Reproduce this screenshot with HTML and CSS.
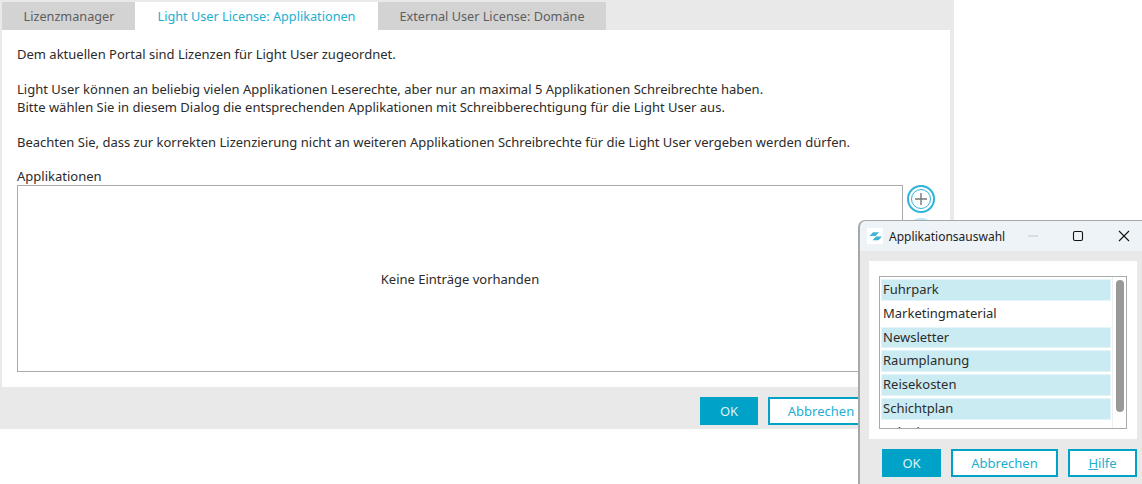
FILE: index.html
```html
<!DOCTYPE html>
<html lang="de">
<head>
    <meta charset="UTF-8" />
    <title>Light User License</title>
    <link rel="stylesheet" href="styles.css">
</head>
<body>
    <div class="panel">
        <div class="tabs">
            <div class="tab tab-manager">Lizenzmanager</div>
            <div class="tab tab-light active">Light User License: Applikationen</div>
            <div class="tab tab-external">External User License: Domäne</div>
        </div>
        <div class="content">
            <p>Dem aktuellen Portal sind Lizenzen für Light User zugeordnet.</p>
            <p>Light User können an beliebig vielen Applikationen Leserechte, aber nur an maximal 5 Applikationen Schreibrechte haben.<br>
            Bitte wählen Sie in diesem Dialog die entsprechenden Applikationen mit Schreibberechtigung für die Light User aus.</p>
            <p>Beachten Sie, dass zur korrekten Lizenzierung nicht an weiteren Applikationen Schreibrechte für die Light User vergeben werden dürfen.</p>
            <div class="field-label">Applikationen</div>
            <div class="field">
                <div class="empty-box">Keine Einträge vorhanden</div>
                <div class="side-buttons">
                    <button class="round-btn" type="button">
                        <svg width="14" height="14" viewBox="0 0 14 14"><path d="M7 1v12M1 7h12" stroke="#777" stroke-width="1.4" fill="none"/></svg>
                    </button>
                    <button class="round-btn faded" type="button"></button>
                </div>
            </div>
        </div>
        <div class="footer">
            <button class="btn primary" type="button">OK</button>
            <button class="btn" type="button">Abbrechen</button>
        </div>
    </div>

    <!-- Dialog window on top of the page -->
    <div class="dialog">
        <div class="titlebar">
            <span class="app-icon">
                <svg width="16" height="16" viewBox="0 0 16 16"><path d="M2.5 8 6 4.2h6L8.500 8zM5.500 12.200 9 8.400h6l-3.500 3.800z" fill="#3fb4d6"/></svg>
            </span>
            <span class="title">Applikationsauswahl</span>
            <span class="win-controls">
                <svg width="12" height="12" viewBox="0 0 12 12"><path d="M1 6h10" stroke="#c4c8ca" stroke-width="1"/></svg>
                <svg width="12" height="12" viewBox="0 0 12 12"><rect x="1.500" y="1.500" width="9" height="9" rx="1.500" fill="none" stroke="#111" stroke-width="1.100"/></svg>
                <svg class="win-close" width="12" height="12" viewBox="0 0 12 12"><path d="M1 1l10 10M11 1L1 11" stroke="#111" stroke-width="1.100" fill="none"/></svg>
            </span>
        </div>
        <div class="dialog-body">
            <div class="list-wrap">
                <div class="list">
                    <div class="list-items">
                        <div class="item selected">Fuhrpark</div>
                        <div class="item">Marketingmaterial</div>
                        <div class="item selected">Newsletter</div>
                        <div class="item selected">Raumplanung</div>
                        <div class="item selected">Reisekosten</div>
                        <div class="item selected">Schichtplan</div>
                        <div class="item">Urlaubsantrag</div>
                    </div>
                    <div class="scrollbar"><div class="thumb"></div></div>
                </div>
            </div>
            <div class="dialog-footer">
                <button class="btn primary dialog-ok" type="button">OK</button>
                <button class="btn dialog-cancel" type="button">Abbrechen</button>
                <button class="btn narrow" type="button"><u>H</u>ilfe</button>
            </div>
        </div>
    </div>
</body>
</html>
```

FILE: styles.css
```css
:root {
    --accent-color: #00a3c7;
    --accent-text: #22aed0;
    --panel-color: #e9e9e9;
    --text-color: #2b2b2b;
}

html, body {
    height: 100%;
}

body {
    margin: 0;
    background-color: white;
    font-family: "Noto Sans", "Open Sans", sans-serif;
    font-size: 13px;
    color: var(--text-color);
    overflow: hidden;
}

.panel {
    width: 954px;
    height: 429px;
    box-sizing: border-box;
    padding: 2px 4px 0 2px;
    background-color: var(--panel-color);
    display: flex;
    flex-direction: column;
}

.tabs {
    display: flex;
    height: 28px;
}

.tab {
    line-height: 28px;
    text-align: center;
    font-size: 12.7px;
    background-color: #d3d3d3;
    color: #5e5e5e;
}

.tab-manager {
    width: 133px;
    padding-left: 1px;
    box-sizing: border-box;
}

.tab-light {
    width: 243px;
}

.tab-external {
    width: 228px;
}

.tab.active {
    background-color: white;
    color: var(--accent-text);
}

.content {
    height: 357px;
    box-sizing: border-box;
    padding: 15px 15px 0;
    background-color: white;
    line-height: 18px;
}

.content p {
    margin: 0 0 17px;
}

.field-label {
    height: 17px;
    line-height: 16px;
}

.field {
    display: flex;
    align-items: flex-start;
}

.empty-box {
    width: 886px;
    height: 187px;
    box-sizing: border-box;
    border: 1px solid #aaa;
    display: flex;
    justify-content: center;
    align-items: center;
}

.side-buttons {
    display: flex;
    flex-direction: column;
    gap: 5px;
    margin-left: 4px;
}

.round-btn {
    width: 28px;
    height: 28px;
    padding: 0;
    border: 2px solid #2db4d6;
    border-radius: 50%;
    outline: 1px solid #2db4d6;
    outline-offset: -5px;
    background-color: white;
    display: flex;
    justify-content: center;
    align-items: center;
}

.round-btn.faded {
    opacity: 0.3;
}

.footer {
    flex: 1;
    display: flex;
    justify-content: flex-end;
    align-items: flex-start;
    gap: 10px;
    padding: 10px 76px 0 0;
}

.btn {
    height: 28px;
    box-sizing: border-box;
    padding: 0;
    width: 106px;
    border: 2px solid var(--accent-color);
    background-color: white;
    color: var(--accent-text);
    font-family: inherit;
    font-size: 13px;
}

.btn.primary {
    width: 58px;
    background-color: var(--accent-color);
    color: #dff3f8;
}

.btn.dialog-ok {
    width: 59px;
}

.btn.dialog-cancel {
    width: 107px;
}

.btn.narrow {
    width: 69px;
}

/* Dialog */
.dialog {
    position: absolute;
    left: 858px;
    top: 220px;
    width: 284px;
    height: 264px;
    box-sizing: border-box;
    border: 1px solid #a8a8a8;
    border-left-width: 2px;
    border-right: none;
    border-bottom: none;
    border-top-left-radius: 7px;
    background-color: var(--panel-color);
    display: flex;
    flex-direction: column;
}

.titlebar {
    height: 30px;
    flex-shrink: 0;
    display: flex;
    align-items: center;
    padding-left: 7px;
    background-color: #edf3f6;
    border-top-left-radius: 7px;
    color: #222;
    font-size: 12px;
}

.app-icon {
    width: 16px;
    height: 16px;
    background-color: white;
    margin-right: 6px;
}

.app-icon svg {
    display: block;
}

.title {
    flex: 1;
}

.win-controls {
    display: flex;
    gap: 33px;
    padding-right: 12px;
    align-items: center;
}

.win-close {
    margin-left: 1px;
}

.dialog-body {
    flex: 1;
    padding: 10px 5px 0 9px;
}

.list-wrap {
    height: 178px;
    box-sizing: border-box;
    padding: 15px 10px 10px;
    background-color: white;
}

.list {
    height: 153px;
    box-sizing: border-box;
    border: 1px solid #aaa;
    display: flex;
    overflow: hidden;
}

.list-items {
    flex: 1;
    padding: 2px 1px 0;
}

.item {
    height: 19.75px;
    line-height: 19px;
    margin-bottom: 2px;
    padding-left: 1px;
    border: 1px solid transparent;
    font-size: 13px;
}

.item.selected {
    background-color: #cbebf3;
    border-color: #e4f5f9;
}

.scrollbar {
    width: 13px;
    border-left: 1px solid #eee;
    display: flex;
    justify-content: center;
    padding-top: 3px;
}

.thumb {
    width: 8px;
    height: 132px;
    background-color: #999;
    border-radius: 4px;
}

.dialog-footer {
    display: flex;
    gap: 10px;
    padding: 10px 0 0 13px;
}
```
